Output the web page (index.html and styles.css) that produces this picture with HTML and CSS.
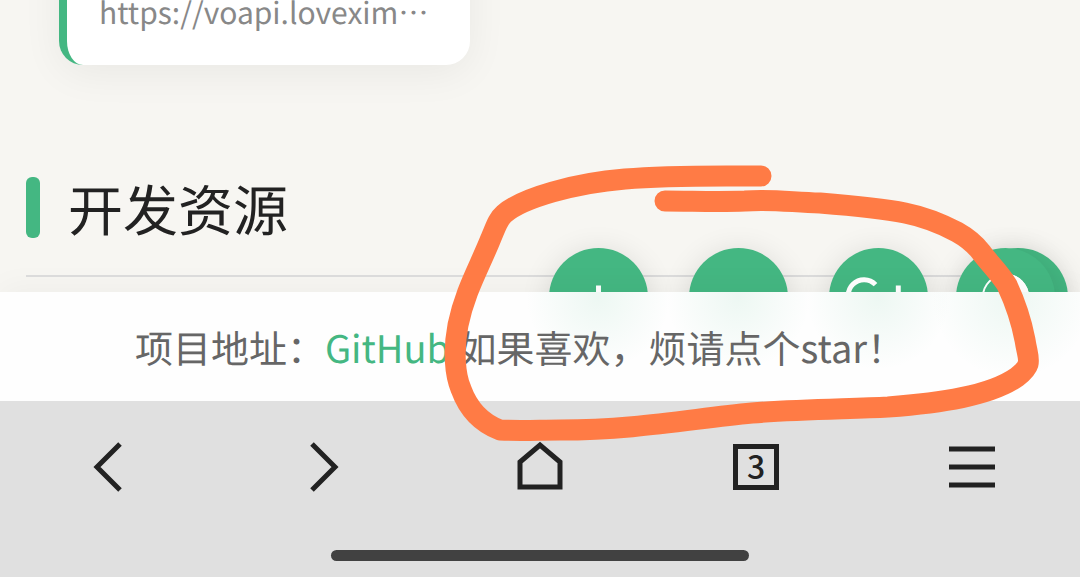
FILE: index.html
```html
<!DOCTYPE html>
<html lang="zh-CN">
<head>
<meta charset="utf-8">
<title>开发资源</title>
<meta name="viewport" content="width=device-width, initial-scale=1">
<link rel="stylesheet" href="styles.css">
</head>
<body>
<main class="content">
  <a class="card" href="#">https://voapi.lovexim⋯</a>
  <header class="section-head">
    <h2 class="section-title">开发资源</h2>
  </header>
</main>
<div class="dock">
  <div class="fabs">
    <button class="fab" type="button" aria-label="放大"><svg viewBox="0 0 100 100"><path d="M50 38v24M38 50h24" stroke-width="5"/></svg></button>
    <button class="fab" type="button" aria-label="缩小"><svg viewBox="0 0 100 100"><path d="M38 50h24" stroke-width="5"/></svg></button>
    <button class="fab" type="button" aria-label="还原"><svg viewBox="0 0 100 100"><path d="M47 37A16 16 0 1 0 47 59M70 38v24M59 50h22" stroke-width="5"/></svg></button>
    <button class="fab fab-under" type="button" aria-label="返回顶部"></button>
    <button class="fab fab-over" type="button" aria-label="切换主题"><svg viewBox="0 0 100 100"><circle cx="50" cy="50" r="23" stroke-width="2"/><path d="M50 26a24 24 0 0 1 0 48z" fill="#fff" stroke="none"/></svg></button>
  </div>
  <footer class="notice">项目地址：<a class="repo" href="#">GitHub</a> 如果喜欢，烦请点个star！</footer>
</div>
<nav class="browser-bar">
  <div class="tools">
    <button class="tool" type="button" aria-label="后退"><svg viewBox="0 0 54 54"><path d="M39 4L16 27l23 23"/></svg></button>
    <button class="tool" type="button" aria-label="前进"><svg viewBox="0 0 54 54"><path d="M15 4l23 23-23 23"/></svg></button>
    <button class="tool" type="button" aria-label="主页"><svg viewBox="0 0 54 54"><path d="M7 47V22L27 5l20 17v25z"/></svg></button>
    <button class="tool" type="button" aria-label="标签页"><span class="tabs">3</span></button>
    <button class="tool" type="button" aria-label="菜单"><svg viewBox="0 0 54 54"><path d="M4 9h46M4 27h46M4 45h46"/></svg></button>
  </div>
  <div class="home-indicator"></div>
</nav>
<svg class="scribble" viewBox="0 0 1080 577" aria-hidden="true">
  <path d="M761 176C715 176 670 175 625 179C575 183 522 198 504 214C498 219 495 229 491 238C479 268 465 291 458 325C453 351 455 375 461 389C469 411 484 424 500 430C520 431 540 430 560 430C635 430 690 419 752 413C800 409 850 409 888 407C940 403 990 396 1017 377C1034 364 1028 360 1025 340C1021 319 1014 300 1007 285C999 272 989 263 981 252C974 243 966 237 957 232C940 223 925 217 905 213C880 208 845 205 820 203C790 202 770 199 745 201C720 202 692 201 665 201"/>
</svg>
</body>
</html>
```
FILE: styles.css
```css
* {
  box-sizing: border-box;
}

body {
  position: relative;
  display: flex;
  flex-direction: column;
  height: 100vh;
  margin: 0;
  overflow: hidden;
  background: #f7f6f2;
  color: #222;
  font-family: "Noto Sans CJK SC", "Noto Sans", sans-serif;
  text-rendering: geometricPrecision;
}

button {
  padding: 0;
  border: 0;
  background: none;
  color: inherit;
  font: inherit;
}

.content {
  display: flex;
  flex: 1;
  flex-direction: column;
  justify-content: flex-end;
  min-height: 0;
  padding: 0 26px 15px;
  overflow: hidden;
}

.card {
  flex: none;
  display: flex;
  align-items: flex-end;
  width: 40%;
  margin-left: 33px;
  padding: 72px 32px 30px;
  border-left: 8px solid #44b782;
  border-radius: 24px;
  background: #fff;
  box-shadow: 0 8px 40px rgba(0, 0, 0, 0.06);
  color: #888;
  font-size: 30px;
  line-height: 48px;
  text-decoration: none;
  white-space: nowrap;
}

.section-head {
  flex: none;
  margin-top: 112px;
  padding-bottom: 37px;
  border-bottom: 2px solid #ddd;
}

.section-title {
  display: flex;
  align-items: center;
  gap: 28px;
  margin: 0;
  font-size: 55px;
  font-weight: 400;
  line-height: 61px;
}

.section-title::before {
  width: 14px;
  height: 61px;
  border-radius: 6px;
  background: #44b782;
  content: "";
}

.dock {
  position: relative;
}

.fabs {
  position: absolute;
  top: -44px;
  right: 25px;
  display: flex;
  gap: 41px;
}

.fab {
  width: 99px;
  height: 99px;
  border-radius: 50%;
  background: #44b782;
  box-shadow: 0 4px 30px rgba(0, 0, 0, 0.12);
}

.fab svg {
  display: block;
  width: 99px;
  height: 99px;
  fill: none;
  stroke: #fff;
}

.fab-under {
  margin-right: -13px;
}

.fab-over {
  margin-left: -140px;
}

.notice {
  position: relative;
  padding: 26px 56px 26px 16px;
  background:
    radial-gradient(circle at calc(100% - 482px) 6px, rgba(68, 183, 130, 0.09), transparent 72px),
    radial-gradient(circle at calc(100% - 342px) 6px, rgba(68, 183, 130, 0.09), transparent 72px),
    radial-gradient(circle at calc(100% - 202px) 6px, rgba(68, 183, 130, 0.09), transparent 72px),
    radial-gradient(circle at calc(100% - 68px) 6px, rgba(68, 183, 130, 0.09), transparent 80px),
    #fefefe;
  box-shadow: 0 -4px 30px rgba(0, 0, 0, 0.04);
  color: #666;
  font-size: 38px;
  line-height: 57px;
  text-align: center;
  white-space: nowrap;
}

.repo {
  color: #44b782;
  text-decoration: none;
}

.browser-bar {
  position: relative;
  padding: 39px 0 16px;
  background: #e0e0e0;
}

.tools {
  display: grid;
  grid-template-columns: repeat(5, 1fr);
  margin-bottom: 56px;
}

.tool {
  display: grid;
  place-items: center;
  height: 54px;
}

.tool svg {
  width: 54px;
  height: 54px;
  fill: none;
  stroke: #222;
  stroke-width: 5;
}

.tabs {
  width: 46px;
  height: 46px;
  border: 5px solid #222;
  font-size: 32px;
  font-weight: 500;
  line-height: 32px;
}

.home-indicator {
  width: 39%;
  max-width: 418px;
  height: 11px;
  margin: 0 auto;
  border-radius: 6px;
  background: #414141;
}

.scribble {
  position: absolute;
  top: 0;
  left: 0;
  width: 100%;
  fill: none;
  stroke: #ff7b45;
  stroke-width: 21;
  stroke-linecap: round;
  stroke-linejoin: round;
  pointer-events: none;
}
```
